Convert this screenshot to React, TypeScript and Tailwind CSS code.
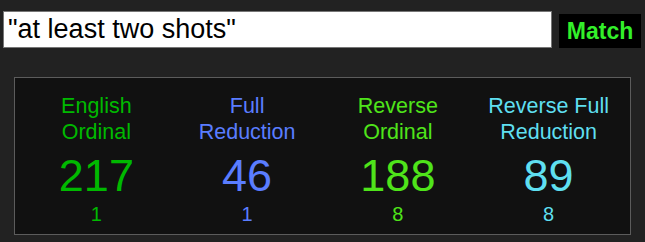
const ciphers = [
  { label: ["English", "Ordinal"], value: 217, sub: 1, color: "text-[#00b900]" },
  { label: ["Full", "Reduction"], value: 46, sub: 1, color: "text-[#5a7dff]" },
  { label: ["Reverse", "Ordinal"], value: 188, sub: 8, color: "text-[#4fe41a]" },
  { label: ["Reverse Full", "Reduction"], value: 89, sub: 8, color: "text-[#5fdff0]" },
];

export default function App() {
  return (
    <div className="min-h-screen bg-[#222222] font-['Liberation_Sans',Arial,sans-serif]">
      <div className="flex items-end gap-[7px] pl-[3px] pt-[11px]">
        <input
          readOnly
          value={'"at least two shots"'}
          className="h-[37px] w-[549px] border border-[#767676] bg-white pl-[4px] text-[27px] text-black outline-none"
        />
        <button className="h-[34px] w-[82px] bg-black text-[23px] font-bold text-[#33f02a]">
          Match
        </button>
      </div>

      <div className="mx-[14px] mt-[29px] grid grid-cols-4 border border-[#5c5c5c] bg-[#111111] px-[6px] pb-[10px] pt-[15px]">
        {ciphers.map((c) => (
          <div key={c.value} className={`flex flex-col items-center text-center ${c.color}`}>
            <div className="text-[21.5px] leading-[26px]">
              {c.label[0]}
              <br />
              {c.label[1]}
            </div>
            <div className="mt-[8px] text-[45px] leading-[45px]">{c.value}</div>
            <div className="mt-[6px] text-[20px] leading-[20px]">{c.sub}</div>
          </div>
        ))}
      </div>
    </div>
  );
}
